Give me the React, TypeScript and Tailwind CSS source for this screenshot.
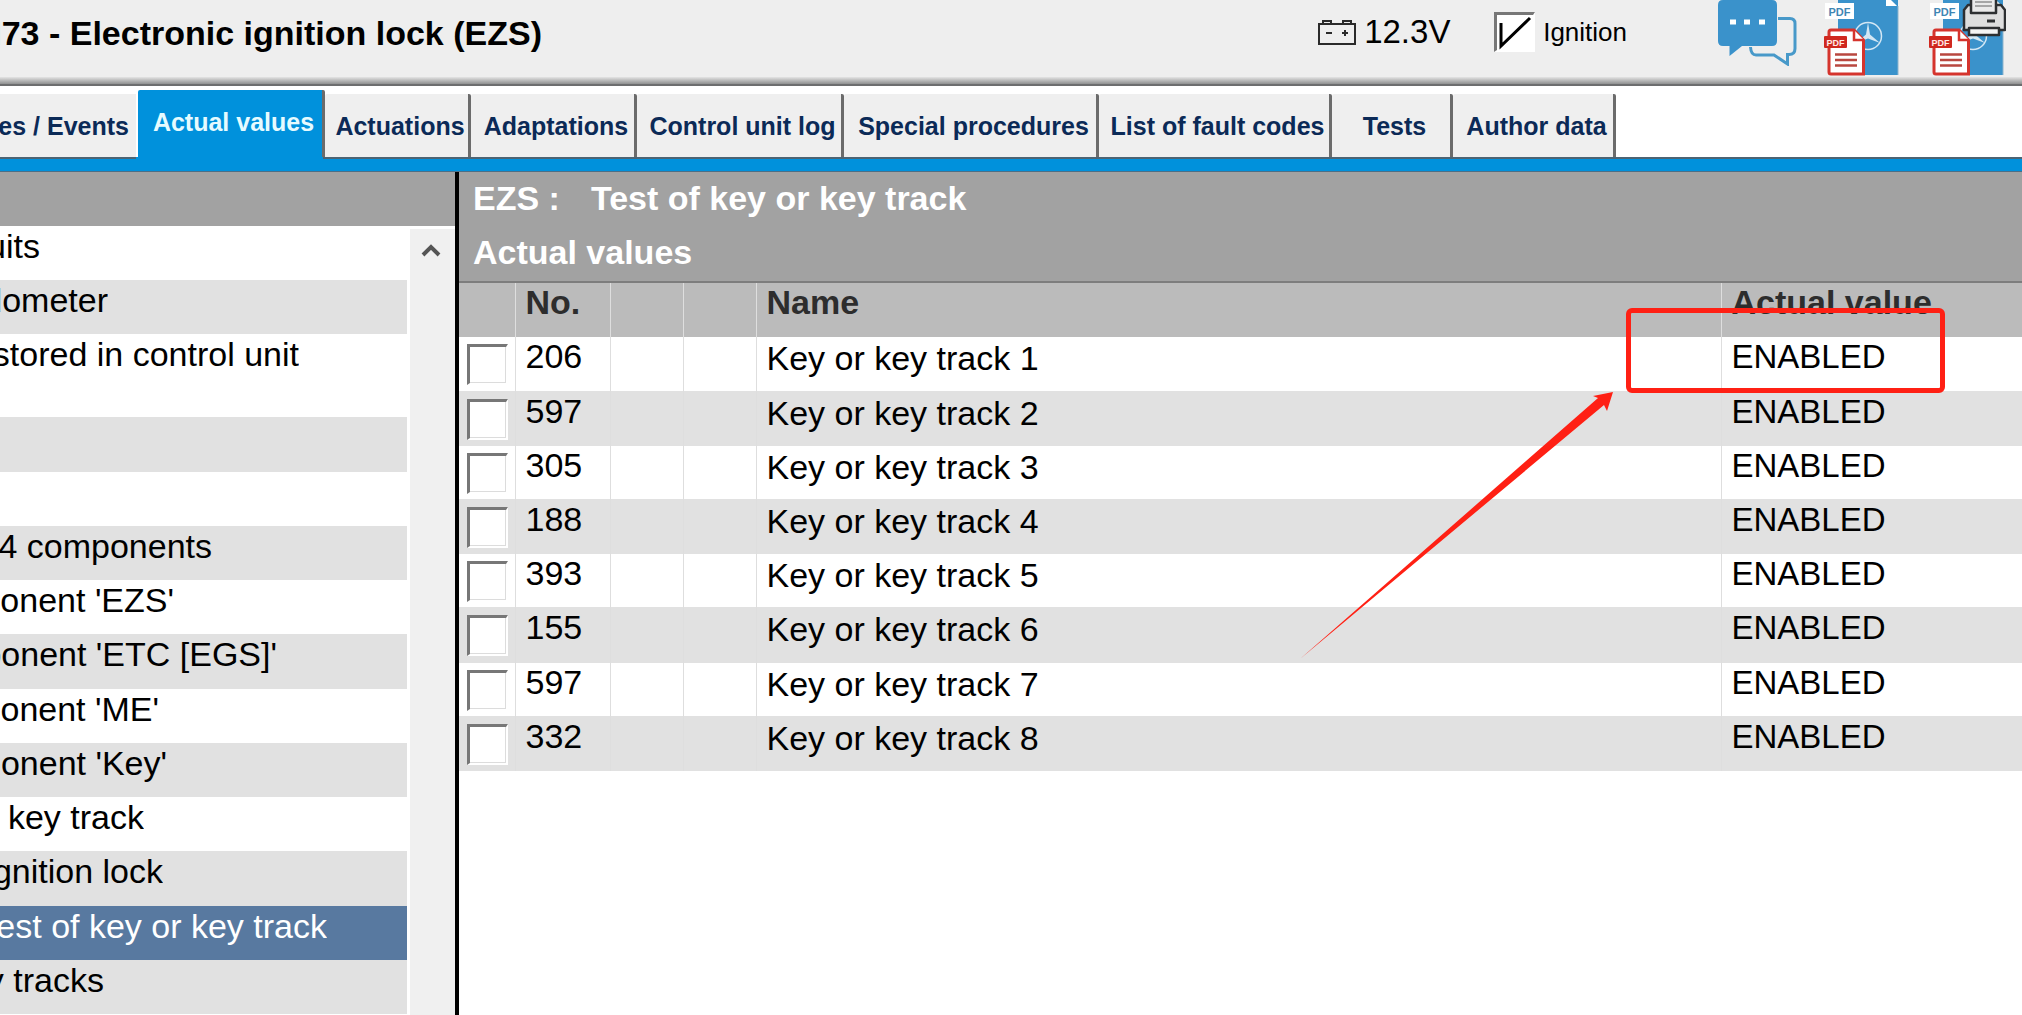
import { useState } from "react";

interface MenuItem {
  label: string;
  width: string;
  tall?: boolean;
}

const tabs = [
  { name: "Actual values", width: "w-[187px]" },
  { name: "Actuations", width: "w-[146px]" },
  { name: "Adaptations", width: "w-[166px]" },
  { name: "Control unit log", width: "w-[207px]" },
  { name: "Special procedures", width: "w-[255px]" },
  { name: "List of fault codes", width: "w-[233px]" },
  { name: "Tests", width: "w-[121px]" },
  { name: "Author data", width: "w-[163px]" },
];

// the list is scrolled sideways, so each label ends at its own width
const menuItems: MenuItem[] = [
  { label: "Circuits", width: "w-[40px]" },
  { label: "Odometer", width: "w-[108px]" },
  { label: "stored in control unit", width: "w-[299px]", tall: true },
  { label: "", width: "w-[40px]" },
  { label: "", width: "w-[40px]" },
  { label: "4 components", width: "w-[212px]" },
  { label: "Component 'EZS'", width: "w-[174px]" },
  { label: "Component 'ETC [EGS]'", width: "w-[277px]" },
  { label: "Component 'ME'", width: "w-[159px]" },
  { label: "Component 'Key'", width: "w-[167px]" },
  { label: "Key or key track", width: "w-[144px]" },
  { label: "Ignition lock", width: "w-[163px]" },
  { label: "Test of key or key track", width: "w-[327px]" },
  { label: "Key tracks", width: "w-[104px]" },
];

const rows = [
  { no: "206", name: "Key or key track 1", value: "ENABLED" },
  { no: "597", name: "Key or key track 2", value: "ENABLED" },
  { no: "305", name: "Key or key track 3", value: "ENABLED" },
  { no: "188", name: "Key or key track 4", value: "ENABLED" },
  { no: "393", name: "Key or key track 5", value: "ENABLED" },
  { no: "155", name: "Key or key track 6", value: "ENABLED" },
  { no: "597", name: "Key or key track 7", value: "ENABLED" },
  { no: "332", name: "Key or key track 8", value: "ENABLED" },
];

function BatteryIcon() {
  return (
    <svg className="w-[38px] h-[28px]" viewBox="0 0 38 28" fill="none" stroke="#2a2a2a" strokeWidth={2}>
      <rect x="1" y="6" width="36" height="20" />
      <path d="M5 6V3h8v3M25 6V3h8v3" />
      <path d="M8 15h6M24 15h6M27 12v6" />
    </svg>
  );
}

function ChatIcon() {
  return (
    <svg className="w-[80px] h-[66px]" viewBox="0 0 80 66">
      <path d="M60 18.500h12q5 0 5 5v25q0 6-6 6h-1.500V64L56 55H38q-5 0-5.500-8" fill="none" stroke="#4899c9" strokeWidth={3} />
      <path d="M5 0h49q5 0 5 5v36q0 5-5 5H24L11.500 56V46H5q-5 0-5-5V5q0-5 5-5z" fill="#3a92cb" />
      <path d="M12 19.500h6v5h-6zM26 19.500h6v5h-6zM41 19.500h6v5h-6z" fill="#fff" />
    </svg>
  );
}

function PdfIcon({ printer = false }: { printer?: boolean }) {
  return (
    <svg className="w-[78px] h-[76px]" viewBox="0 0 78 76">
      <path d="M15 0h48l12 6v69H15z" fill="#3a92cb" />
      <path d="M67 0h8v7z" fill="#3a92cb" />
      <path d="M75 6v69" stroke="#8db4cc" />
      <path d="M63 0h5l6 6H63z" fill="#fff" />
      <rect x="2" y="3" width="29" height="16" fill="#fff" />
      <text x="16.500" y="15.500" textAnchor="middle" fontSize="11" fontWeight="bold" fill="#3f86b4">PDF</text>
      <g fill="none" stroke="#d3e7f4" strokeWidth={1.5}>
        <circle cx="45" cy="36" r="13.500" />
        <path d="M45 22.500l2 12 10 8.500-12-4.500-12 4.500 10-8.500z" fill="#d3e7f4" stroke="none" />
      </g>
      <path d="M8 30h23l9.500 10v34H8q-2 0-2-2V32q0-2 2-2z" fill="#fff" stroke="#d5342d" strokeWidth={3} />
      <path d="M31 30v10h10" fill="#fff" stroke="#d5342d" strokeWidth={2.5} />
      <rect x="1" y="36" width="23" height="12" rx="1" fill="#d0281f" />
      <text x="12.500" y="45.500" textAnchor="middle" fontSize="9" fontWeight="bold" fill="#ffe9e6">PDF</text>
      <path d="M12 54.500h22M12 60h22M12 65.500h22" stroke="#b9473f" strokeWidth={2.5} />
      {printer && (
        <g stroke="#2d2f31" strokeWidth={2.5} strokeLinejoin="round">
          <path d="M40 5h33l4 5v20H36V10z" fill="#dedede" />
          <path d="M43 13V-2h25v15z" fill="#e9e9e9" />
          <path d="M47 2h17M47 6h17" stroke="#8e8e8e" strokeWidth={1.5} />
          <path d="M41 28h30v7H41z" fill="#f4f4f4" />
          <path d="M59 21h8" strokeWidth={3} />
        </g>
      )}
    </svg>
  );
}

function Header() {
  const [ignition, setIgnition] = useState(true);

  return (
    <header className="bg-[#eeeeee]">
      <div className="flex items-start justify-between h-[77px] pr-4">
        <div className="flex justify-end items-center w-[542px] h-[66px] overflow-hidden">
          <h1 className="shrink-0 font-bold whitespace-nowrap">N73 - Electronic ignition lock (EZS)</h1>
        </div>
        <div className="flex items-start">
          <div className="flex items-center h-16 mr-[91px]">
            <BatteryIcon />
            <span className="ml-2 w-[84px] text-[33px] whitespace-nowrap">12.3V</span>
            <label className="flex items-center gap-2 ml-[46px] text-[26px]">
              <span className="relative flex">
                <input
                  type="checkbox"
                  checked={ignition}
                  onChange={(e) => setIgnition(e.target.checked)}
                  className="appearance-none w-[41px] h-[40px] bg-white border-t-3 border-l-3 border-[#777] border-r-2 border-b-2 border-r-white border-b-white"
                />
                {ignition && (
                  <svg className="absolute inset-0 pointer-events-none" viewBox="0 0 41 40" fill="none" stroke="#000" strokeWidth={3}>
                    <path d="M7 11v23L36 6" />
                  </svg>
                )}
              </span>
              Ignition
            </label>
          </div>
          <button type="button" aria-label="Messages" className="mr-[25px]">
            <ChatIcon />
          </button>
          <button type="button" aria-label="Save as PDF" className="mr-[27px]">
            <PdfIcon />
          </button>
          <button type="button" aria-label="Print PDF">
            <PdfIcon printer />
          </button>
        </div>
      </div>
      <div className="h-[7px] bg-linear-to-b from-[#e4e4e4] to-[#8f9090]" />
      <div className="h-[2px] bg-[#6c6d6e]" />
    </header>
  );
}

function TabBar() {
  const [active, setActive] = useState("Actual values");

  return (
    <nav className="bg-white">
      <div className="flex items-end h-[71px] pt-1 text-[25px] font-bold text-[#0b2a57]">
        <button
          type="button"
          className="flex justify-end items-center shrink-0 w-[136px] h-[63px] pr-[7px] overflow-hidden bg-[#efefef] font-bold whitespace-nowrap"
        >
          <span className="shrink-0">Fault codes / Events</span>
        </button>
        <div className="w-[2px]" />
        {tabs.map((tab) => (
          <button
            key={tab.name}
            type="button"
            onClick={() => setActive(tab.name)}
            className={`flex justify-center shrink-0 pl-[7px] font-bold whitespace-nowrap border-r-3 border-[#6b6b6b] rounded-t-xs ${tab.width} ${
              active === tab.name
                ? "h-[67px] pt-[13px] bg-[#0091dc] text-[#e6fbff]"
                : "h-[63px] items-center bg-[#efefef]"
            }`}
          >
            {tab.name}
          </button>
        ))}
      </div>
      <div className="flex h-[2px]">
        <div className="w-[136px] bg-[#4c6474]" />
        <div className="w-[187px] bg-[#0091dc]" />
        <div className="flex-1 bg-[#4c6474]" />
      </div>
      <div className="h-[12px] bg-[#0091dc]" />
      <div className="h-px bg-[#4c6f86]" />
    </nav>
  );
}

function Sidebar() {
  const [selected, setSelected] = useState(12);

  return (
    <aside className="flex flex-col shrink-0 w-[459px] border-r-4 border-black">
      <div className="shrink-0 h-[54px] bg-[#a2a2a2]" />
      <div className="flex flex-1 min-h-0 overflow-hidden">
        <ul className="flex flex-col w-[407px] h-[788px]">
          {menuItems.map((item, index) => (
            <li
              key={index}
              onClick={() => setSelected(index)}
              className={`pt-px ${item.tall ? "h-[83px] shrink-0" : "flex-1"} ${
                selected === index
                  ? "bg-[#5879a0] text-white"
                  : index % 2 === 1
                  ? "bg-[#e1e1e1]"
                  : "bg-white"
              }`}
            >
              <div className={`flex justify-end overflow-hidden whitespace-nowrap ${item.width}`}>
                <span className="shrink-0">{item.label}</span>
              </div>
            </li>
          ))}
        </ul>
        <div className="flex-1 ml-[3px] mt-[3px] pr-[3px] bg-[#f0f0f0]">
          <button type="button" aria-label="Scroll up" className="flex justify-center w-full pt-3">
            <svg className="w-[20px] h-[16px]" viewBox="0 0 20 16" fill="none" stroke="#555" strokeWidth={4}>
              <path d="M2 14l8-8 8 8" />
            </svg>
          </button>
        </div>
      </div>
    </aside>
  );
}

function ValuesTable() {
  return (
    <table className="w-full h-[488px] table-fixed border-collapse">
      <colgroup>
        <col className="w-[56px]" />
        <col className="w-[95px]" />
        <col className="w-[73px]" />
        <col className="w-[73px]" />
        <col />
        <col className="w-[301px]" />
      </colgroup>
      <thead>
        <tr className="h-[54px] bg-[#bbbbbb] text-left align-top text-[#2d2d2d] [&>th]:pl-[10px] [&>th+th]:border-l [&>th]:border-[#dedede]">
          <th></th>
          <th>No.</th>
          <th></th>
          <th></th>
          <th>Name</th>
          <th>Actual value</th>
        </tr>
      </thead>
      <tbody>
        {rows.map((row, index) => (
          <tr
            key={index}
            className="h-[54px] align-top odd:bg-white even:bg-[#e1e1e1] border-b border-[#e1e1e1] [&>td+td]:pl-[10px] [&>td+td]:border-l [&>td]:border-[#dedede]"
          >
            <td className="pl-2 pt-[7px]">
              <input
                type="checkbox"
                aria-label={row.name}
                className="block appearance-none w-[41px] h-[41px] bg-white border-t-3 border-l-3 border-r-2 border-b-2 border-t-[#777] border-l-[#777] border-r-white border-b-white shadow-[inset_-1px_-1px_0_#dcdcdc]"
              />
            </td>
            <td>{row.no}</td>
            <td></td>
            <td></td>
            <td className="pt-[2px]">{row.name}</td>
            <td className="pt-px text-[33px]">{row.value}</td>
          </tr>
        ))}
      </tbody>
    </table>
  );
}

export default function App() {
  return (
    <div className="relative flex flex-col h-screen overflow-hidden bg-white font-['Liberation_Sans',Arial,sans-serif] text-[34px] leading-[38px] text-black">
      <Header />
      <TabBar />
      <div className="flex flex-1 min-h-0">
        <Sidebar />
        <main className="flex-1 min-w-0">
          <div className="h-[111px] pl-[14px] pt-[7px] bg-[#a2a2a2] border-b-2 border-[#7d7d7d] font-bold text-white">
            <h2 className="flex gap-[31px]">
              <span>EZS :</span>
              <span>Test of key or key track</span>
            </h2>
            <p className="mt-4">Actual values</p>
          </div>
          <ValuesTable />
        </main>
      </div>

      {/* callout around the first value, with its arrow */}
      <div className="absolute top-[308px] right-[77px] w-[319px] h-[85px] border-5 border-[#ff2014] rounded-md pointer-events-none" />
      <svg className="absolute top-[392px] right-[409px] w-[313px] h-[267px] pointer-events-none" viewBox="0 0 313 267">
        <path d="M0 267L298 6L293 4L313 0L307 19L304 13Z" fill="#ff2014" />
      </svg>
    </div>
  );
}
